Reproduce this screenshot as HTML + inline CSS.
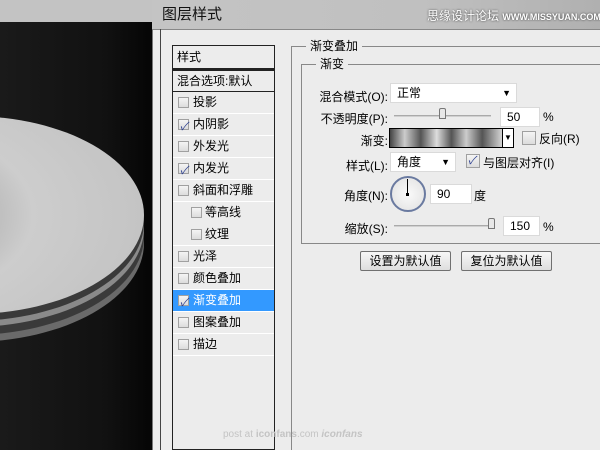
<!DOCTYPE html>
<html><head><meta charset="utf-8"><style>
*{margin:0;padding:0;box-sizing:border-box}
body{width:600px;height:450px;overflow:hidden;position:relative;background:#ececec;font-family:"Liberation Sans","Noto Sans CJK SC",sans-serif;font-size:12px;color:#000}
.abs{position:absolute;white-space:nowrap}
.cb{position:absolute;width:11px;height:11px;border:1px solid #a0a0a0;background:linear-gradient(#f4f4f4,#dcdcdc)}
.ck::after{content:"✓";position:absolute;left:1px;top:-3px;font-size:11px;color:#2a3d8f}
.row{position:absolute;left:173px;width:101px;height:22px;border-bottom:1px solid #fff;line-height:21px}
.row span{position:absolute;left:20px}
.in{position:absolute;background:#fff;border:1px solid #dadada;height:20px;line-height:18px;padding-left:6px}
.lbl{position:absolute;text-align:right;width:92px;left:296px}
.btn{position:absolute;height:20px;border:1px solid #707070;border-radius:2px;background:linear-gradient(#f7f7f7,#dedede);text-align:center;line-height:18px}
</style></head><body>
<div class="abs" style="left:0;top:0;width:152px;height:22px;background:#c3c3c3"></div>
<div class="abs" style="left:0;top:22px;width:152px;height:428px;background:linear-gradient(90deg,#1a1a1a,#111 70%,#050505)"></div>
<svg class="abs" style="left:0;top:22px" width="152" height="428">
<defs><radialGradient id="g" cx="0.2" cy="0.5" r="0.8"><stop offset="0" stop-color="#8e8e8e"/><stop offset="0.35" stop-color="#b0b0b0"/><stop offset="0.6" stop-color="#cdcdcd"/><stop offset="1" stop-color="#c4c4c4"/></radialGradient></defs>
<ellipse cx="-30" cy="221" rx="174" ry="99" fill="#6a6a6a"/>
<ellipse cx="-30" cy="214" rx="174" ry="99" fill="#3a3a3a"/>
<ellipse cx="-30" cy="206" rx="174" ry="99" fill="#8a8a8a"/>
<ellipse cx="-30" cy="200" rx="174" ry="99" fill="#3a3a3a"/>
<ellipse cx="-30" cy="193" rx="174" ry="99" fill="url(#g)"/>
</svg>
<div class="abs" style="left:152px;top:0;width:448px;height:29px;background:linear-gradient(90deg,#c4c4c4,#c0c0c0 60%,#b0b0b0)"></div>
<div class="abs" style="left:162px;top:3px;font-size:15px;color:#111">图层样式</div>
<div class="abs" style="left:427px;top:7px;font-size:12px;color:#fff;text-shadow:0 0 2px #333">思缘设计论坛 <span style="font-size:9px;font-weight:bold">WWW.MISSYUAN.COM</span></div>
<div class="abs" style="left:152px;top:29px;width:448px;height:421px;background:#ececec;border-top:1px solid #888;border-left:1px solid #777"></div>
<div class="abs" style="left:160px;top:29px;width:1px;height:421px;background:#444"></div>
<div class="abs" style="left:172px;top:45px;width:103px;height:24px;border:1px solid #222;padding:4px 4px;line-height:14px">样式</div>
<div class="abs" style="left:172px;top:69px;width:103px;height:381px;border:1px solid #222;border-top:2px solid #222"></div>
<div class="abs" style="left:173px;top:71px;width:101px;height:21px;border-bottom:1px solid #222;line-height:20px;padding-left:4px">混合选项:默认</div>
<div class="row" style="top:92px"><i class="cb" style="left:5px;top:5px"></i><span>投影</span></div>
<div class="row" style="top:114px"><i class="cb ck" style="left:5px;top:5px"></i><span>内阴影</span></div>
<div class="row" style="top:136px"><i class="cb" style="left:5px;top:5px"></i><span>外发光</span></div>
<div class="row" style="top:158px"><i class="cb ck" style="left:5px;top:5px"></i><span>内发光</span></div>
<div class="row" style="top:180px"><i class="cb" style="left:5px;top:5px"></i><span>斜面和浮雕</span></div>
<div class="row" style="top:202px;border:0"><i class="cb" style="left:18px;top:5px"></i><span style="left:32px">等高线</span></div>
<div class="row" style="top:224px"><i class="cb" style="left:18px;top:5px"></i><span style="left:32px">纹理</span></div>
<div class="row" style="top:246px"><i class="cb" style="left:5px;top:5px"></i><span>光泽</span></div>
<div class="row" style="top:268px"><i class="cb" style="left:5px;top:5px"></i><span>颜色叠加</span></div>
<div class="row" style="top:290px;background:#3399ff;color:#fff"><i class="cb ck" style="left:5px;top:5px"></i><span>渐变叠加</span></div>
<div class="row" style="top:312px"><i class="cb" style="left:5px;top:5px"></i><span>图案叠加</span></div>
<div class="row" style="top:334px"><i class="cb" style="left:5px;top:5px"></i><span>描边</span></div>
<div class="abs" style="left:291px;top:46px;width:1px;height:404px;background:#888"></div>
<div class="abs" style="left:291px;top:46px;width:309px;height:1px;background:#888"></div>
<div class="abs" style="left:306px;top:39px;background:#ececec;padding:0 4px;line-height:14px">渐变叠加</div>
<div class="abs" style="left:301px;top:64px;width:310px;height:180px;border:1px solid #888"></div>
<div class="abs" style="left:316px;top:57px;background:#ececec;padding:0 4px;line-height:14px">渐变</div>
<div class="lbl" style="top:88px">混合模式(O):</div>
<div class="in" style="left:390px;top:83px;width:127px;line-height:18px">正常<span class="abs" style="right:5px;top:0;font-size:9px">▼</span></div>
<div class="lbl" style="top:110px">不透明度(P):</div>
<div class="abs" style="left:394px;top:115px;width:97px;height:2px;background:#d0d0d0;border-top:1px solid #aaa"></div>
<div class="abs" style="left:439px;top:108px;width:7px;height:11px;background:#e8e8e8;border:1px solid #777;border-radius:2px 2px 0 0"></div>
<div class="in" style="left:500px;top:107px;width:40px">50</div>
<div class="abs" style="left:543px;top:110px">%</div>
<div class="lbl" style="top:132px">渐变:</div>
<div class="abs" style="left:389px;top:128px;width:125px;height:20px;border:1px solid #000;background:linear-gradient(90deg,#444,#ccc 12%,#555 25%,#ddd 38%,#555 50%,#ccc 62%,#555 75%,#ccc 90%,#fff)"></div>
<div class="abs" style="left:502px;top:128px;width:12px;height:20px;background:#fff;border:1px solid #000;font-size:8px;text-align:center;line-height:18px">▼</div>
<i class="cb" style="left:522px;top:131px;width:14px;height:14px"></i>
<div class="abs" style="left:539px;top:130px">反向(R)</div>
<div class="lbl" style="top:157px">样式(L):</div>
<div class="in" style="left:390px;top:152px;width:66px">角度<span class="abs" style="right:5px;top:0;font-size:9px">▼</span></div>
<i class="cb ck" style="left:466px;top:154px;width:14px;height:14px"></i>
<div class="abs" style="left:483px;top:154px">与图层对齐(I)</div>
<div class="lbl" style="top:187px">角度(N):</div>
<div class="abs" style="left:390px;top:176px;width:36px;height:36px;border-radius:50%;border:2px solid #6a7aa0;background:radial-gradient(#fafafa,#e0e0e0)"></div>
<div class="abs" style="left:407px;top:179px;width:1px;height:16px;background:#000"></div>
<div class="abs" style="left:406px;top:193px;width:3px;height:3px;background:#000"></div>
<div class="in" style="left:430px;top:184px;width:42px">90</div>
<div class="abs" style="left:474px;top:187px">度</div>
<div class="lbl" style="top:220px">缩放(S):</div>
<div class="abs" style="left:394px;top:225px;width:97px;height:2px;background:#d0d0d0;border-top:1px solid #aaa"></div>
<div class="abs" style="left:488px;top:218px;width:7px;height:11px;background:#e8e8e8;border:1px solid #777;border-radius:2px 2px 0 0"></div>
<div class="in" style="left:503px;top:216px;width:37px">150</div>
<div class="abs" style="left:543px;top:220px">%</div>
<div class="btn" style="left:360px;top:251px;width:91px">设置为默认值</div>
<div class="btn" style="left:461px;top:251px;width:91px">复位为默认值</div>
<div class="abs" style="left:223px;top:429px;color:#c4c4c4;font-size:10px">post at <b>iconfans</b>.com <i style="font-weight:bold">iconfans</i></div>
</body></html>
